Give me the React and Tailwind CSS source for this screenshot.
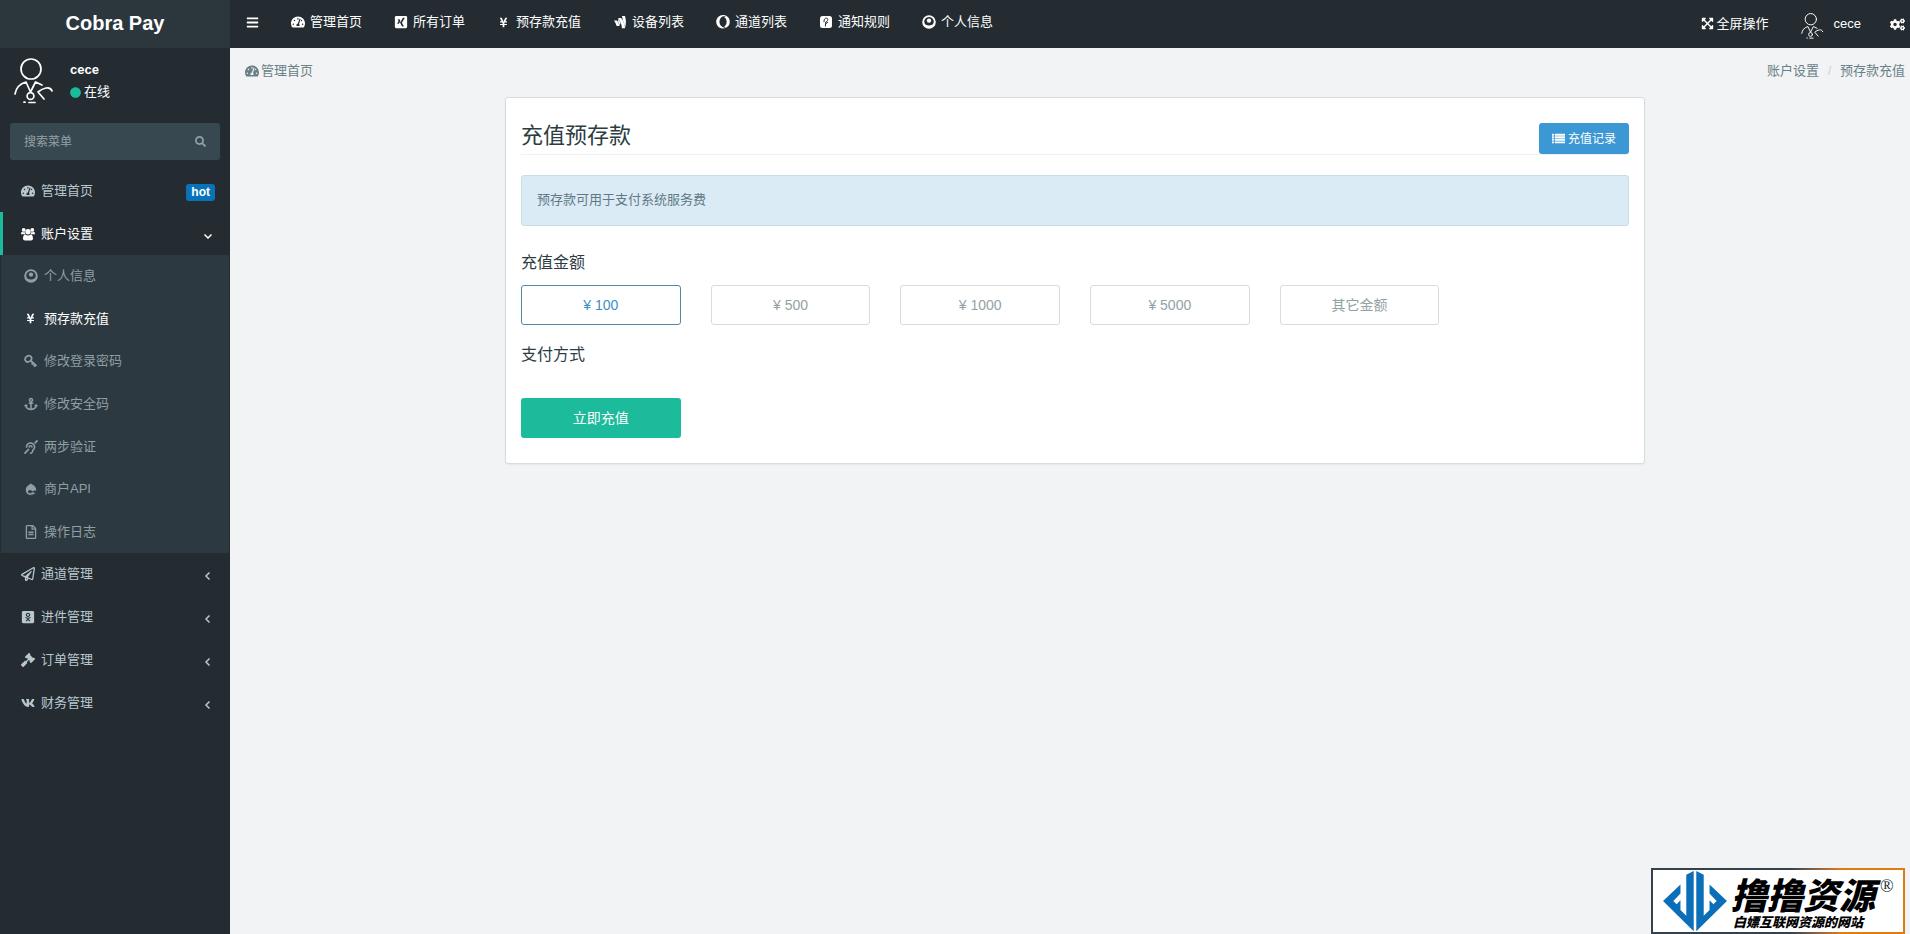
import { useState } from 'react';
import {
  FaAnchor,
  FaBars,
  FaCircle,
  FaCogs,
  FaDeaf,
  FaDrupal,
  FaExpandArrowsAlt,
  FaGavel,
  FaGoogleWallet,
  FaOdnoklassnikiSquare,
  FaOpera,
  FaRegFileAlt,
  FaRegPaperPlane,
  FaSearch,
  FaTachometerAlt,
  FaVk,
  FaXingSquare,
  FaYenSign,
} from 'react-icons/fa';

// Old-style glyphs that the icon pack no longer ships
const UserCircleIcon = ({ className }) => (
  <svg viewBox="0 0 14 14" className={className} fill="currentColor" aria-hidden="true">
    <path fillRule="evenodd" d="M7 .2a6.800 6.800 0 1 1 0 13.600A6.800 6.800 0 0 1 7 .2zM7 1.900a4.700 4.700 0 0 0-4.300 6.600c.5 1 1.300 1.900 4.300 1.900s3.800-.9 4.300-1.900A4.700 4.700 0 0 0 7 1.900z" />
    <circle cx="7" cy="5.600" r="2.200" />
  </svg>
);

const UsersIcon = ({ className }) => (
  <svg viewBox="0 0 14 14" className={className} fill="currentColor" aria-hidden="true">
    <circle cx="2.700" cy="2.900" r="1.900" />
    <circle cx="11.300" cy="2.900" r="1.900" />
    <circle cx="7" cy="4.700" r="2.700" />
    <path d="M0 7.200C0 5.600.5 4.600 1.300 4.700c.9.700 1.800.7 2.500.3-.1 1 .2 1.700.6 2.300H1.200C.5 7.300 0 7.500 0 7.200zM14 7.200c0-1.600-.5-2.600-1.300-2.500-.9.7-1.800.7-2.500.3.1 1-.2 1.700-.6 2.300h3.200c.7 0 1.200.2 1.200-.1zM2 11.600c0-2.500.7-4.200 2.300-4.200 1.700 1.300 3.700 1.300 5.400 0 1.600 0 2.300 1.700 2.300 4.200 0 1.300-.8 2-2 2H4c-1.200 0-2-.7-2-2z" />
  </svg>
);

const KeyIcon = ({ className }) => (
  <svg viewBox="0 0 14 14" className={className} fill="none" stroke="currentColor" aria-hidden="true">
    <ellipse cx="4.300" cy="4.800" rx="3.400" ry="2.800" strokeWidth="1.700" transform="rotate(-35 4.300 4.800)" />
    <path d="M6.500 6.500l6 5.500M9.200 9l-1.500 1.600M11.300 10.800l-1.600 1.700" strokeWidth="1.900" />
  </svg>
);

const ListIcon = ({ className }) => (
  <svg viewBox="0 0 14 14" className={className} fill="currentColor" aria-hidden="true">
    <path d="M0 2h2v2H0zM3 2h11v2H3zM0 4.700h2v2H0zM3 4.700h11v2H3zM0 7.400h2v2H0zM3 7.400h11v2H3zM0 10.100h2v2H0zM3 10.100h11v2H3z" />
  </svg>
);

const PiperIcon = ({ className }) => (
  <svg viewBox="0 0 14 14" className={className} aria-hidden="true">
    <rect x="1" y="1" width="12" height="12" rx="2.500" fill="currentColor" />
    <path d="M6.300 11.500l.5-4.500M5 7.200c0-3.500 1.200-4.200 2.600-4 1.700.2 1.500 3.300-.8 3.800M7 8.500l2-1.200" fill="none" stroke="#242c32" strokeWidth="1" />
  </svg>
);

const Chevron = ({ down }) => (
  <svg viewBox="0 0 10 10" className="mt-1 size-[10px]" fill="none" stroke="currentColor" strokeWidth="1.500" aria-hidden="true">
    <path d={down ? 'M1.500 3.500L5 7l3.500-3.500' : 'M6.500 1.500L3 5l3.500 3.500'} />
  </svg>
);

const navItems = [
  { label: '管理首页', icon: FaTachometerAlt },
  { label: '所有订单', icon: FaXingSquare },
  { label: '预存款充值', icon: FaYenSign, small: true },
  { label: '设备列表', icon: FaGoogleWallet },
  { label: '通道列表', icon: FaOpera },
  { label: '通知规则', icon: PiperIcon },
  { label: '个人信息', icon: UserCircleIcon },
];

const accountItems = [
  { label: '个人信息', icon: UserCircleIcon },
  { label: '预存款充值', icon: FaYenSign, small: true, active: true },
  { label: '修改登录密码', icon: KeyIcon },
  { label: '修改安全码', icon: FaAnchor },
  { label: '两步验证', icon: FaDeaf },
  { label: '商户API', icon: FaDrupal },
  { label: '操作日志', icon: FaRegFileAlt },
];

const groups = [
  { label: '通道管理', icon: FaRegPaperPlane },
  { label: '进件管理', icon: FaOdnoklassnikiSquare },
  { label: '订单管理', icon: FaGavel },
  { label: '财务管理', icon: FaVk },
];

const amounts = ['¥ 100', '¥ 500', '¥ 1000', '¥ 5000', '其它金额'];

// Fixed width icon slot
const Icon = ({ icon: Glyph, small }) => (
  <span className="flex w-[17px] shrink-0 justify-center">
    <Glyph className={small ? 'size-[11px]' : 'size-[14px]'} />
  </span>
);

const Avatar = ({ className }) => (
  <svg viewBox="0 0 40 46" className={className} fill="none" stroke="currentColor" strokeWidth="1.700" strokeLinecap="round" strokeLinejoin="round" aria-hidden="true">
    <circle cx="17" cy="11" r="10" />
    <path d="M1 36c1-6 4-10 11-12l4.500 10L21.500 24l6.500 3" />
    <circle cx="16.500" cy="38" r="3.400" />
    <path d="M38 33c-1-3-3-3.500-6-3-3 .5-5 1.500-8 4l6 7M15 44.500h6M10 44.200h1" />
  </svg>
);

const Watermark = () => (
  <div className="fixed right-[5px] bottom-0 h-[66px] w-[254px] bg-linear-to-r from-[#33424c] from-55% to-[#e07b10] to-75% p-[2px]">
    <div className="flex h-full bg-white">
      <svg viewBox="45 17 204 192" className="ml-[8px] h-[62px] w-[68px] shrink-0" fill="#0a6fb8" aria-hidden="true">
        <path d="M102 62v28l-22 23 10 10 12-12v30l18 18V32l23-12v187L48 113z" />
        <path d="M192 62v28l22 23-10 10-12-12v30l-18 18V32l-23-12v187l95-94z" />
      </svg>
      <div className="ml-[2px] text-black italic">
        <p className="mt-[8px] text-[36px] leading-[38px] font-black">撸撸资源</p>
        <p className="ml-[2px] text-[13px] leading-[14px] font-black">白嫖互联网资源的网站</p>
      </div>
      <span className="mt-[6px] ml-[5px] font-['Liberation_Serif',serif] text-[18px] leading-[20px] text-[#242c32]">®</span>
    </div>
  </div>
);

const Sidebar = () => (
  <aside className="w-[230px] shrink-0 bg-[#242c32] text-[#b8c7ce]">
    <a href="#" className="flex h-12 items-center justify-center bg-[#2b363d] pb-[2px] text-[20px] font-bold text-white">
      Cobra Pay
    </a>
    <div className="flex h-[75px] gap-4 pt-[10px] pl-[14px] text-white">
      <Avatar className="h-[46px] w-10" />
      <div>
        <p className="leading-[24px] font-bold">cece</p>
        <a href="#" className="flex items-center gap-[3px] leading-[20px]">
          <FaCircle className="size-[11px] text-[#1cbb9b]" />
          在线
        </a>
      </div>
    </div>
    <form className="mx-[10px] mb-[9px] flex h-[37px] items-center rounded-[3px] bg-[#374850] px-[14px]">
      <input
        aria-label="搜索菜单"
        placeholder="搜索菜单"
        className="min-w-0 flex-1 bg-transparent text-[12px] outline-none placeholder:text-[#93a1a5]"
      />
      <button type="button" aria-label="搜索" className="text-[#93a1a5]">
        <FaSearch className="size-[11px]" />
      </button>
    </form>

    <nav>
      <a href="#" className="flex h-[43px] items-center gap-[5px] pr-[15px] pl-[19px]">
        <Icon icon={FaTachometerAlt} />
        <span className="flex-1">管理首页</span>
        <span className="mt-1 rounded-[3px] bg-[#0973ba] px-[5px] text-[12px] leading-[17px] font-bold text-white">hot</span>
      </a>
      <a href="#" className="flex h-[43px] items-center gap-[5px] border-l-3 border-[#1cbb9b] pr-[17px] pl-4 text-white">
        <Icon icon={UsersIcon} />
        <span className="flex-1">账户设置</span>
        <Chevron down />
      </a>
      <ul className="mx-px grid h-[298px] auto-rows-fr bg-[#2d3940]">
        {accountItems.map((item) => (
          <li key={item.label}>
            <a
              href="#"
              className={`flex h-full items-center gap-[5px] pl-[21px] ${item.active ? 'text-white' : 'text-[#8f9fa4]'}`}
            >
              <Icon icon={item.icon} small={item.small} />
              {item.label}
            </a>
          </li>
        ))}
      </ul>
      {groups.map((item) => (
        <a key={item.label} href="#" className="flex h-[43px] items-center gap-[5px] pr-[17px] pb-[2px] pl-[19px]">
          <Icon icon={item.icon} />
          <span className="flex-1">{item.label}</span>
          <Chevron />
        </a>
      ))}
    </nav>
  </aside>
);

const Header = () => (
  <header className="flex h-12 items-center bg-[#242c32] pr-[5px] text-white">
    <button type="button" aria-label="菜单" className="w-11 pb-1 pl-4">
      <FaBars className="size-[13px]" />
    </button>
    <nav className="flex flex-1 pb-1">
      {navItems.map((item) => (
        <a key={item.label} href="#" className="flex items-center gap-1 px-[15px]">
          <Icon icon={item.icon} small={item.small} />
          {item.label}
        </a>
      ))}
    </nav>
    <a href="#" className="flex items-center gap-[3px] pb-px">
      <FaExpandArrowsAlt className="size-[13px]" />
      全屏操作
    </a>
    <a href="#" className="ml-[32px] flex items-center gap-[10px]">
      <Avatar className="mt-[3px] h-[26px] w-[23px]" />
      cece
    </a>
    <button type="button" aria-label="设置" className="ml-[29px]">
      <FaCogs className="size-[15px]" />
    </button>
  </header>
);

export default function App() {
  const [amount, setAmount] = useState(amounts[0]);

  return (
    <div className="flex min-h-screen bg-[#f1f3f5] font-['Liberation_Sans','Noto_Sans_CJK_SC',sans-serif] text-[13px] leading-[20px]">
      <Sidebar />
      <div className="min-w-0 flex-1">
        <Header />
        <div className="flex justify-between pt-[13px] pr-[5px] pl-[13px] text-[#6b7f87]">
          <a href="#" className="flex items-center gap-[1px]">
            <Icon icon={FaTachometerAlt} />
            管理首页
          </a>
          <div className="flex">
            <a href="#">账户设置</a>
            <span className="w-[21px] text-center text-[#ccd3d6]">/</span>
            <span>预存款充值</span>
          </div>
        </div>

        <main className="pt-4 pl-[10px]">
          <section className="mx-auto max-w-[1140px] rounded-[3px] border border-[#d5dde0] bg-white px-[15px] pb-[25px] shadow-xs">
            <div className="mt-[25px] flex h-8 items-start justify-between border-b border-[#eff2f3]">
              <h1 className="text-[22px] leading-[26px] text-[#2c3c42]">充值预存款</h1>
              <button type="button" className="flex h-[31px] items-center gap-[3px] rounded-[3px] bg-[#3c97d5] px-[13px] text-[12px] text-white">
                <ListIcon className="size-[13px]" />
                充值记录
              </button>
            </div>
            <p className="mt-5 h-[51px] rounded-[3px] border border-[#c9dde5] bg-[#dbebf5] px-[15px] pt-[14px] text-[#5f7a85]">
              预存款可用于支付系统服务费
            </p>

            <h2 className="mt-[26px] text-[16px] leading-[22px] text-[#2c3c42]">充值金额</h2>
            <div className="mt-[11px] -mr-[30px] grid grid-cols-6">
              {amounts.map((item) => (
                <button
                  key={item}
                  type="button"
                  onClick={() => setAmount(item)}
                  className={`mr-[30px] h-10 rounded-[3px] border text-[14px] ${
                    item === amount ? 'border-[#5288a5] text-[#3c8fc5]' : 'border-[#d5dde0] text-[#93a1a5]'
                  }`}
                >
                  {item}
                </button>
              ))}
            </div>
            <h2 className="mt-[19px] text-[16px] leading-[22px] text-[#2c3c42]">支付方式</h2>
            <div className="mt-8 -mr-[30px] grid grid-cols-6">
              <button type="button" className="mr-[30px] h-10 rounded-[3px] bg-[#1cbb9b] text-[14px] text-white">
                立即充值
              </button>
            </div>
          </section>
        </main>
      </div>
      <Watermark />
    </div>
  );
}
